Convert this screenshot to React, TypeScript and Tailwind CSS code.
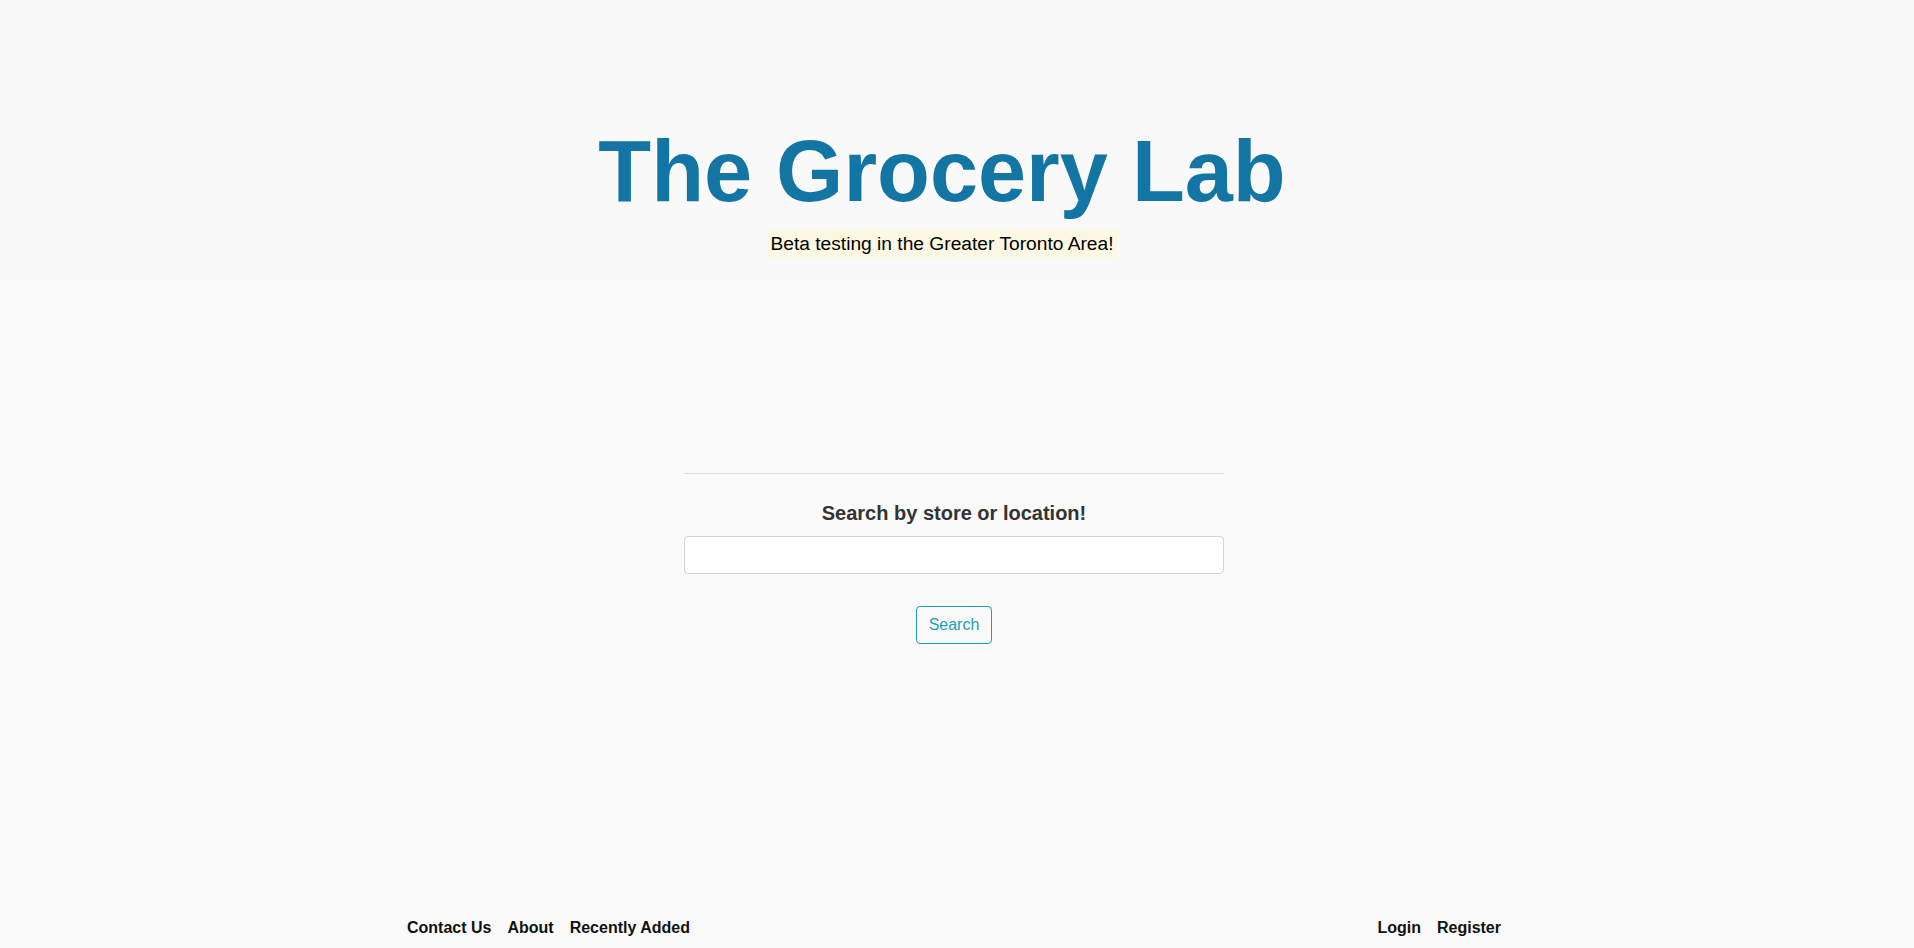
import React, { useState } from 'react';

const App: React.FC = () => {
  const [query, setQuery] = useState('');

  return (
    <div
      className="h-screen flex flex-col bg-[#fafafa] text-[#212529]"
      style={{ fontFamily: '"Liberation Sans", Arial, sans-serif' }}
    >
      {/* Header band */}
      <header className="bg-[#f9f9f9] pt-[120px] pb-[20px] pr-[30px] text-center">
        <h1 className="text-[86.5px] leading-[102px] font-bold text-[#1275a4] mb-[8px]">The Grocery Lab</h1>
        <p className="text-[19.2px] leading-[28px] text-black">
          <mark className="bg-[#fcf8e3] px-[3.8px] py-[3.8px] text-black">Beta testing in the Greater Toronto Area!</mark>
        </p>
      </header>

      {/* Search */}
      <main className="flex-1 pt-[195px] pr-[6px]">
        <div className="w-[540px] mx-auto flex flex-col items-center">
          <hr className="w-full border-0 border-t border-[#dedede]" />
          <h4 className="mt-[27px] text-[20px] leading-[24px] font-bold text-[#333]">Search by store or location!</h4>
          <input
            type="text"
            value={query}
            onChange={(e) => setQuery(e.target.value)}
            className="mt-[11px] w-full h-[38px] bg-white border border-[#ced4da] rounded-[4px] px-3 text-base outline-none"
          />
          <button className="mt-[32px] h-[38px] px-3 border border-[#17a2b8] rounded-[4px] text-[#17a2b8] text-base leading-6">
            Search
          </button>
        </div>
      </main>

      {/* Footer */}
      <footer className="w-[1100px] mx-auto pb-[11px] pr-[6px] flex items-center justify-between text-base leading-[18px] font-bold text-[#111]">
        <nav className="flex gap-4">
          <a href="#">Contact Us</a>
          <a href="#">About</a>
          <a href="#">Recently Added</a>
        </nav>
        <nav className="flex gap-4">
          <a href="#">Login</a>
          <a href="#">Register</a>
        </nav>
      </footer>
    </div>
  );
};

export default App;
